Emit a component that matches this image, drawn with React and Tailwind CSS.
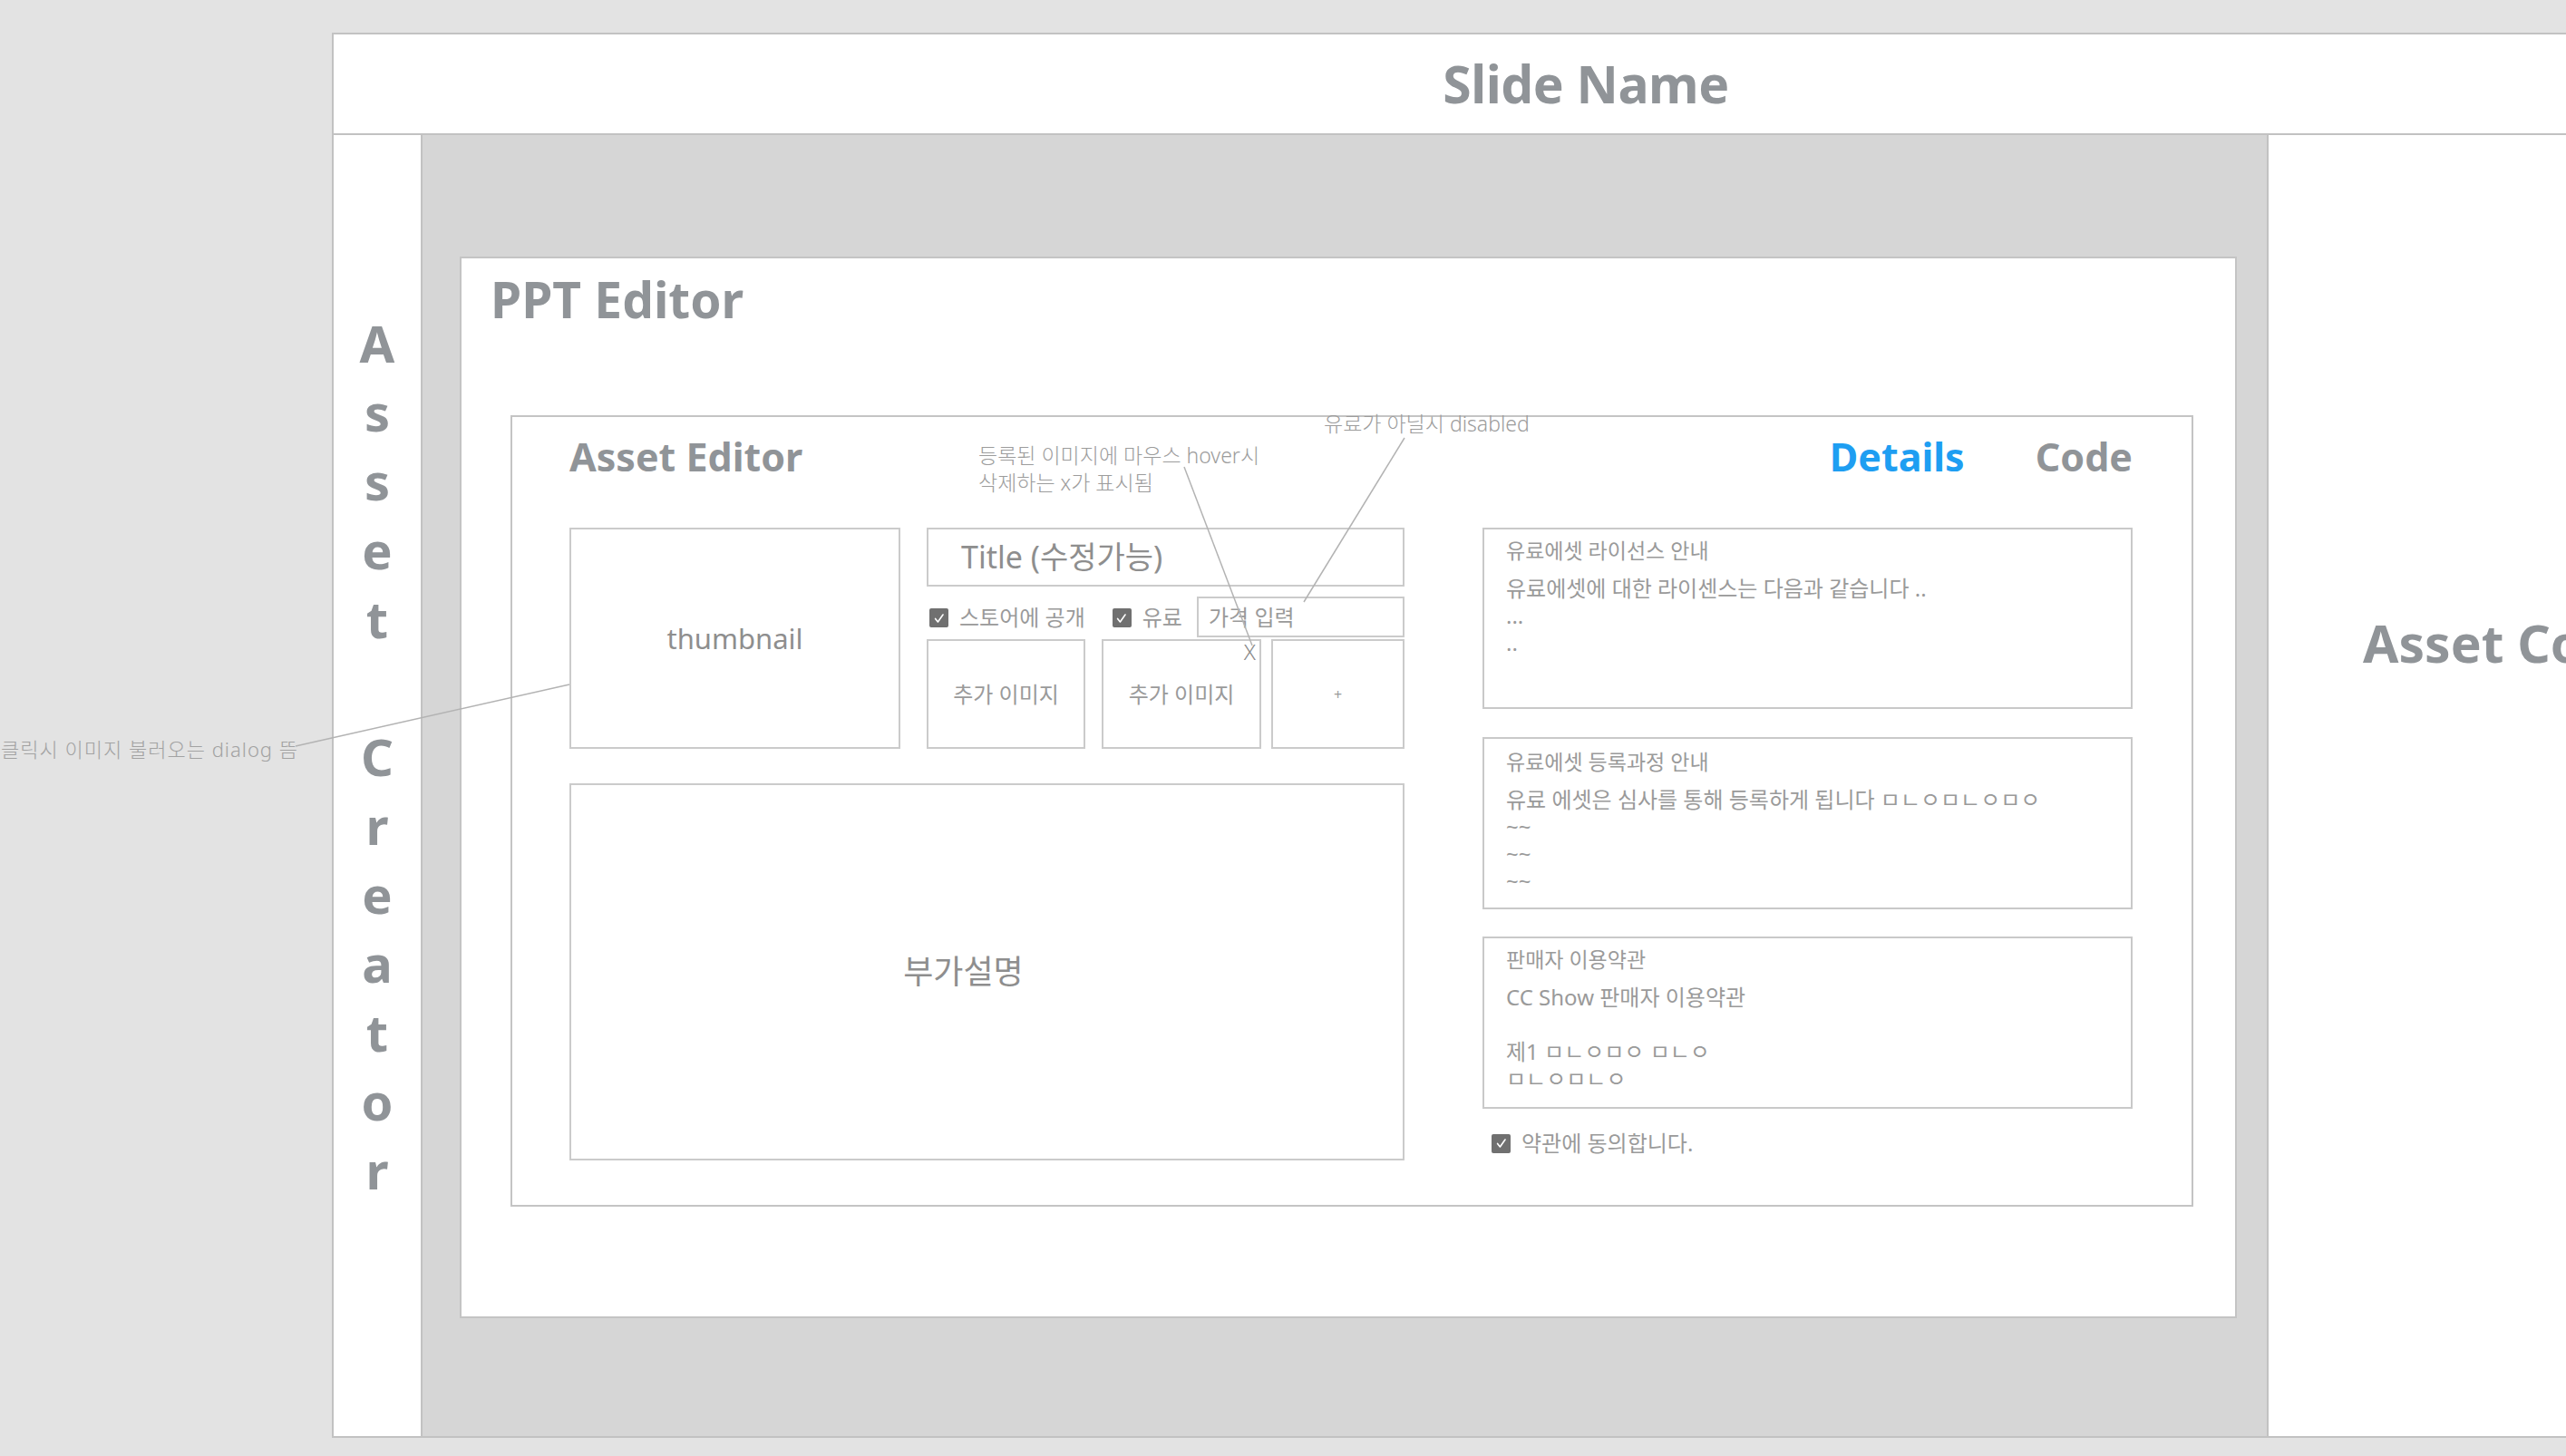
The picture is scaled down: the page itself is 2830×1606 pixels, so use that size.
import React from 'react';

const Check = () => (
  <span className="inline-flex items-center justify-center w-[21px] h-[21px] rounded-[2px] bg-[#707070] shrink-0">
    <svg viewBox="0 0 20 20" className="w-[16px] h-[16px]" fill="none" stroke="#fff" strokeWidth="2" strokeLinecap="round" strokeLinejoin="round">
      <path d="M4.5 10.5l3.5 4.5 7-10" />
    </svg>
  </span>
);

const InfoBox = ({ title, lines, className }) => (
  <div className={`border-2 border-[#c9c9c9] pl-[24px] pt-[8px] text-[#9a9a9a] ${className}`}>
    <div className="text-[23px] leading-[30px]">{title}</div>
    <div className="mt-[12px] text-[24px] leading-[30px]">
      {lines.map((l, i) => (
        <div key={i} className="h-[30px] whitespace-nowrap">{l}</div>
      ))}
    </div>
  </div>
);

export default function App() {
  const sideLetters = 'Asset Creator'.split('');

  return (
    <div className="relative w-[2830px] h-[1606px] overflow-hidden bg-[#e3e3e3] font-['Noto_Sans','Noto_Sans_CJK_KR',sans-serif] text-[#909498]">
      <div className="pl-[366px] pt-[36px]">
        {/* outer frame */}
        <div className="w-[2766px] h-[1550px] border-2 border-[#c2c2c2] bg-white flex flex-col">
          {/* header */}
          <div className="h-[111px] border-b-2 border-[#c2c2c2] flex items-center justify-center">
            <span className="text-[57px] font-bold leading-none tracking-[-0.5px]">Slide Name</span>
          </div>

          <div className="flex flex-1">
            {/* sidebar */}
            <div className="w-[98px] border-r-2 border-[#c2c2c2] pt-[191px] flex flex-col items-center">
              {sideLetters.map((ch, i) => (
                <div key={i} className="h-[76px] text-[56px] font-bold leading-[76px]">{ch === ' ' ? '' : ch}</div>
              ))}
            </div>

            {/* canvas area */}
            <div className="w-[2034px] bg-[#d6d6d6] pl-[41px] pt-[134px]">
              <div className="w-[1960px] h-[1171px] border-2 border-[#c4c4c4] bg-white pl-[32px] pt-[17px]">
                <div className="text-[55px] font-bold leading-none">PPT Editor</div>

                {/* asset editor */}
                <div className="ml-[22px] mt-[101px] w-[1856px] h-[873px] border-2 border-[#c4c4c4] pl-[63px] pr-[65px] pt-[22px]">
                  <div className="flex items-start justify-between">
                    <div className="text-[43px] font-bold leading-none">Asset Editor</div>
                    <div className="flex gap-[78px] text-[43px] font-bold leading-none">
                      <span className="text-[#1e9ef2]">Details</span>
                      <span>Code</span>
                    </div>
                  </div>

                  <div className="mt-[57px] flex gap-[86px]">
                    {/* left column */}
                    <div className="w-[921px]">
                      <div className="flex gap-[29px] h-[244px]">
                        <div className="w-[365px] border-2 border-[#cbcbcb] flex items-center justify-center text-[31px] text-[#8e8e8e]">
                          thumbnail
                        </div>
                        <div className="w-[527px] flex flex-col">
                          <div className="h-[65px] border-2 border-[#cbcbcb] flex items-center pl-[36px] text-[34px] text-[#8e8e8e]">
                            Title (수정가능)
                          </div>
                          <div className="mt-[11px] h-[45px] flex items-center text-[24px] text-[#9a9a9a]">
                            <span className="ml-[3px]"><Check /></span>
                            <span className="ml-[12px]">스토어에 공개</span>
                            <span className="ml-[30px]"><Check /></span>
                            <span className="ml-[12px]">유료</span>
                            <div className="ml-auto w-[229px] h-[45px] border-2 border-[#cbcbcb] flex items-center pl-[11px]">가격 입력</div>
                          </div>
                          <div className="mt-[2px] flex h-[121px] text-[24px] text-[#9a9a9a]">
                            <div className="w-[175px] border-2 border-[#cbcbcb] flex items-center justify-center">추가 이미지</div>
                            <div className="relative ml-[18px] w-[176px] border-2 border-[#cbcbcb] flex items-center justify-center">
                              추가 이미지
                              <span className="absolute right-[4px] top-[0px] text-[24px] leading-[24px] font-light text-[#8a8a8a]">X</span>
                            </div>
                            <div className="ml-[11px] w-[147px] border-2 border-[#cbcbcb] flex items-center justify-center text-[16px]">+</div>
                          </div>
                        </div>
                      </div>
                      <div className="mt-[38px] h-[416px] border-2 border-[#cbcbcb] flex items-center justify-center pr-[52px] text-[36px] text-[#8e8e8e]">
                        부가설명
                      </div>
                    </div>

                    {/* right column */}
                    <div className="w-[717px] flex flex-col">
                      <InfoBox
                        className="h-[200px]"
                        title="유료에셋 라이선스 안내"
                        lines={['유료에셋에 대한 라이센스는 다음과 같습니다 ..', '...', '..']}
                      />
                      <InfoBox
                        className="mt-[31px] h-[190px] pt-[10px]"
                        title="유료에셋 등록과정 안내"
                        lines={['유료 에셋은 심사를 통해 등록하게 됩니다 ㅁㄴㅇㅁㄴㅇㅁㅇ', '~~', '~~', '~~']}
                      />
                      <InfoBox
                        className="mt-[30px] h-[190px]"
                        title="판매자 이용약관"
                        lines={['CC Show 판매자 이용약관', '', '제1 ㅁㄴㅇㅁㅇ ㅁㄴㅇ', 'ㅁㄴㅇㅁㄴㅇ']}
                      />
                      <div className="mt-[20px] ml-[10px] flex items-center gap-[12px] text-[24px] text-[#9a9a9a]">
                        <Check />
                        <span>약관에 동의합니다.</span>
                      </div>
                    </div>
                  </div>
                </div>
              </div>
            </div>

            {/* right panel */}
            <div className="flex-1 border-l-2 border-[#c2c2c2] pl-[104px] pt-[532px]">
              <div className="text-[57px] font-bold leading-none whitespace-nowrap">Asset Code</div>
            </div>
          </div>
        </div>
      </div>

      {/* annotations */}
      <div className="absolute left-[1079px] top-[487px] text-[23px] leading-[30px] font-light text-[#9c9c9c] whitespace-nowrap">
        <div>등록된 이미지에 마우스 hover시</div>
        <div>삭제하는 x가 표시됨</div>
      </div>
      <div className="absolute left-[1460px] top-[452px] text-[23px] leading-[30px] font-light text-[#9c9c9c] whitespace-nowrap">
        유료가 아닐시 disabled
      </div>
      <div className="absolute right-[2501px] top-[811px] text-[22px] leading-[30px] font-light text-[#a2a2a2] whitespace-nowrap tracking-[1px]">
        클릭시 이미지 불러오는 dialog 뜸
      </div>
      <svg className="absolute left-0 top-0 w-[2830px] h-[1606px] pointer-events-none" viewBox="0 0 2830 1606">
        <g stroke="#b3b3b3" strokeWidth="1.5" fill="none">
          <line x1="326" y1="823" x2="628" y2="755" />
          <line x1="1306" y1="515" x2="1381" y2="712" />
          <line x1="1549" y1="483" x2="1438" y2="664" />
        </g>
      </svg>
    </div>
  );
}
